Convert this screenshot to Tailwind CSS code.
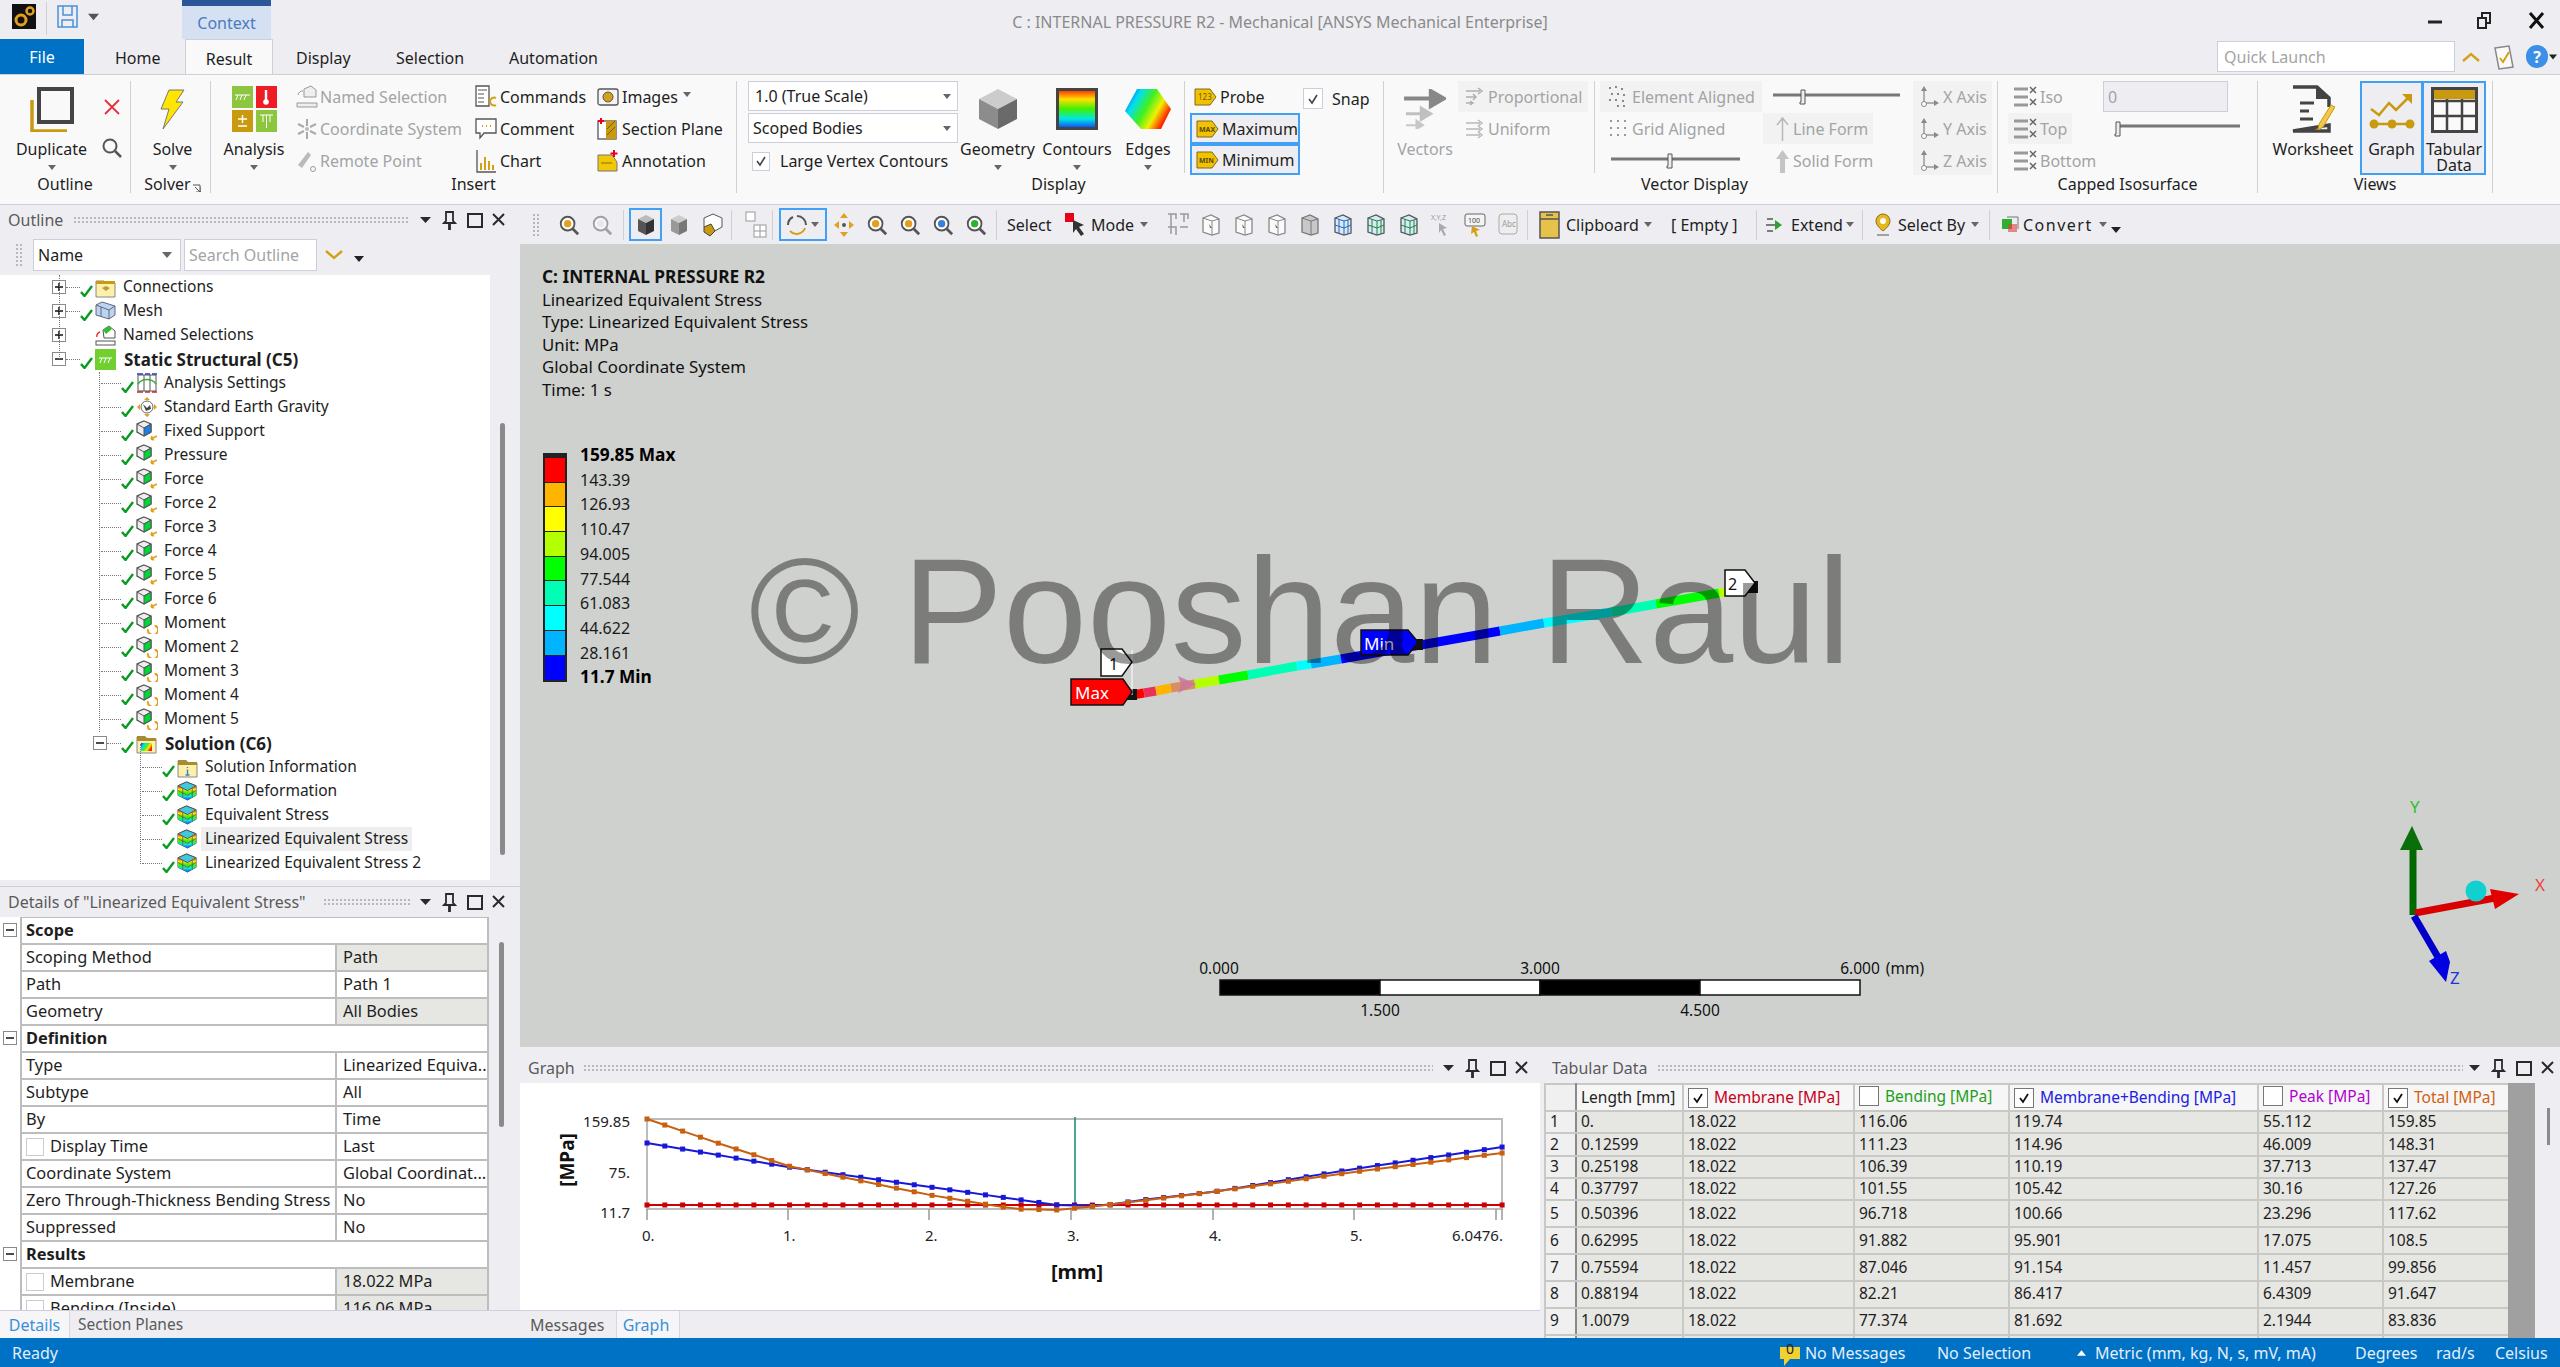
<!DOCTYPE html>
<html lang="en">
<head>
<meta charset="UTF-8" />
<title>C : INTERNAL PRESSURE R2 - Mechanical</title>
<script src="https://cdn.jsdelivr.net/npm/@tailwindcss/browser@4"></script>
</head>
<body class="w-[2560px] h-[1367px] overflow-hidden bg-[#eeeef2] font-['Noto_Sans',sans-serif] text-[16px] leading-none text-[#1e1e1e]">

<!-- shared icons -->
<svg class="absolute w-0 h-0">
  <defs>
    <linearGradient id="rainbow" x1="0" y1="0" x2="0" y2="1">
      <stop offset="0" stop-color="#ff2000"/><stop offset=".25" stop-color="#ffe000"/><stop offset=".5" stop-color="#40f000"/><stop offset=".75" stop-color="#00e8e0"/><stop offset="1" stop-color="#1040ff"/>
    </linearGradient>
    <linearGradient id="rainbow2" x1="0" y1="0" x2="1" y2=".5">
      <stop offset="0" stop-color="#1030f0"/><stop offset=".3" stop-color="#00e0f0"/><stop offset=".55" stop-color="#40f020"/><stop offset=".78" stop-color="#f0f000"/><stop offset="1" stop-color="#ff2000"/>
    </linearGradient>
  </defs>
  <symbol id="ok" viewBox="0 0 13 12"><path d="M1 7l3.500 4L12 1" fill="none" stroke="#0a9a22" stroke-width="2.400"/></symbol>
  <symbol id="plus" viewBox="0 0 14 14"><rect x=".5" y=".5" width="13" height="13" fill="#fff" stroke="#8a8a8a"/><path d="M3 7h8M7 3v8" stroke="#111" stroke-width="1.500"/></symbol>
  <symbol id="minus" viewBox="0 0 14 14"><rect x=".5" y=".5" width="13" height="13" fill="#fff" stroke="#8a8a8a"/><path d="M3 7h8" stroke="#111" stroke-width="1.500"/></symbol>
  <symbol id="cube" viewBox="0 0 22 22">
    <path d="M8 1l7 3v8l-7 4-7-4V4z" fill="#eee" stroke="#555" stroke-width="1.300"/>
    <path d="M8 8l7-4v8l-7 4z" fill="currentColor" stroke="#555"/>
    <path d="M1 4l7 4 7-4" fill="none" stroke="#555"/>
  </symbol>
  <symbol id="load" viewBox="0 0 22 22"><path d="M21 16l-6 3m0 0l1-3m-1 3l3 1" fill="none" stroke="#e0a020" stroke-width="1.600"/></symbol>
  <symbol id="moment" viewBox="0 0 22 22"><path d="M20 14a5 5 0 1 1-8 3" fill="none" stroke="#e0a020" stroke-width="1.800"/><path d="M18 13l3 0-1 3" fill="#e0a020"/></symbol>
  <symbol id="result" viewBox="0 0 22 22">
    <path d="M10 1l10 4v10l-9 5-10-5V5z" fill="#999" stroke="#555"/>
    <path d="M1 5l10 5v10l-10-5z" fill="url(#rainbow)"/>
    <path d="M11 10l9-5v10l-9 5z" fill="url(#rainbow)"/>
    <path d="M1 5l9-4 10 4-9 5z" fill="#40c8e0" stroke="#555"/>
    <path d="M6 7.500v10M16 7.500v10M1 10l10 5 9-5" fill="none" stroke="#555" stroke-width=".8"/>
  </symbol>
  <symbol id="mag" viewBox="0 0 24 24">
    <circle cx="10.500" cy="10.500" r="7.500" fill="#fff" stroke="#555" stroke-width="2"/>
    <circle cx="10.500" cy="10.500" r="4" fill="currentColor"/>
    <path d="M16 16l6 6" stroke="#555" stroke-width="3"/>
  </symbol>
  <symbol id="caret" viewBox="0 0 10 6"><path d="M0 0h10L5 6z" fill="currentColor"/></symbol>
  <symbol id="panelctl" viewBox="0 0 90 20">
    <path d="M4 7h11l-5.500 6z" fill="#2a2a2a"/>
    <path d="M30 2h7v9l2 2h-5v6h-1v-6h-5l2-2z" fill="none" stroke="#2a2a2a" stroke-width="1.800"/>
    <rect x="52" y="4" width="14" height="13" fill="none" stroke="#2a2a2a" stroke-width="2"/>
    <path d="M77 4l11 11M88 4L77 15" stroke="#2a2a2a" stroke-width="2"/>
  </symbol>
  <symbol id="face" viewBox="0 0 22 24"><path d="M3 5l8-3 8 4v14l-7 2-9-3z" fill="#fafafa" stroke="#888" stroke-width="1.300"/><path d="M3 5l9 3 7-2M12 8v14" fill="none" stroke="#888"/><path d="M9 11l3 4h-2z" fill="#666"/></symbol>
  <symbol id="meshbox" viewBox="0 0 22 24"><path d="M3 5l8-3 8 4v14l-7 2-9-3z" fill="#d8e8ff" stroke="#555" stroke-width="1.300"/><path d="M3 5l9 3 7-2M12 8v14M3 12l9 3 7-3M7 6v14M16 7v14" fill="none" stroke="#2a6ab0"/></symbol>
  <symbol id="meshgreen" viewBox="0 0 22 24"><path d="M3 5l8-3 8 4v14l-7 2-9-3z" fill="#d8e8ff" stroke="#555" stroke-width="1.300"/><path d="M3 5l9 3 7-2M12 8v14M3 12l9 3 7-3M7 6v14M16 7v14" fill="none" stroke="#208a30"/></symbol>
  <symbol id="arrowsgray" viewBox="0 0 44 42"><path d="M0 10h32M28 2l14 8-14 8z" fill="#888" stroke="#888" stroke-width="4"/><path d="M2 26h20M18 20l10 6-10 6z" fill="#c0c0c0" stroke="#c0c0c0" stroke-width="3"/><path d="M2 38h14M13 33l7 5-7 4z" fill="#c8c8c8" stroke="#c8c8c8" stroke-width="2"/></symbol>
  <symbol id="axis" viewBox="0 0 22 24"><path d="M6 3v15h11" fill="none" stroke="#999" stroke-width="1.500"/><path d="M3 6l3-5 3 5zM16 15l5 3-5 3z" fill="#888"/><circle cx="6" cy="19" r="2.500" fill="#fff" stroke="#888"/></symbol>
  <symbol id="iso" viewBox="0 0 24 24"><path d="M1 4h14M1 12h14M1 20h14" stroke="#999" stroke-width="3"/><path d="M17 2l6 6m0-6l-6 6M17 14l6 6m0-6l-6 6" stroke="#666" stroke-width="1.500"/></symbol>
</svg>

<!-- title bar -->
<header class="grid grid-cols-[1fr_auto_1fr] h-[39px]">
  <div class="flex items-start">
    <svg class="w-6 h-[25px] ml-3 mt-1" viewBox="0 0 24 25"><rect width="24" height="25" fill="#111"/><circle cx="9" cy="16" r="5" fill="none" stroke="#e0a020" stroke-width="3"/><circle cx="18" cy="7" r="3.500" fill="none" stroke="#e0a020" stroke-width="2.500"/></svg>
    <i class="w-px h-[33px] bg-[#d0d0d4] ml-[10px] mt-0.5"></i>
    <svg class="w-[21px] h-[23px] ml-2.5 mt-[5px]" viewBox="0 0 21 23"><path d="M1 1h19v21H1zM6 1v9h9V1M5 22v-7h11v7" fill="none" stroke="#4a90d9" stroke-width="1.500"/></svg>
    <svg class="w-[11px] h-2 ml-2.5 mt-[13px] text-[#555]"><use href="#caret"/></svg>
    <div class="ml-[84px] w-[89px] h-[39px] bg-[#d5e1f2] border-t-[6px] border-[#2b579a] text-center text-[#4a7bbd] pt-[9px] -translate-x-[1px]">Context</div>
  </div>
  <div class="pt-[14px] text-[#8a8a8a] whitespace-nowrap">C : INTERNAL PRESSURE R2 - Mechanical [ANSYS Mechanical Enterprise]</div>
  <div class="flex justify-end items-start">
    <svg class="w-[120px] h-[24px] mr-[12px] mt-[9px]" viewBox="0 0 120 24">
      <path d="M0 13h14" stroke="#222" stroke-width="3"/>
      <path d="M50 9h8v10h-8zM54 8V4h8v10h-3" fill="none" stroke="#222" stroke-width="2"/>
      <path d="M102 4l13 15M115 4l-13 15" stroke="#111" stroke-width="3"/>
    </svg>
  </div>
</header>

<!-- ribbon tabs -->
<nav class="flex h-[35px] items-center whitespace-nowrap">
  <div class="w-[84px] h-[35px] bg-[#0072c6] text-white flex items-center justify-center">File</div>
  <div class="w-[101px] pl-[31px] pt-[3px]">Home</div>
  <div class="w-[88px] h-[35px] pt-[3px] flex items-center justify-center bg-[#f9f9f9] border-x border-t border-[#d0d0d4]">Result</div>
  <div class="w-[123px] pl-[23px] pt-[3px]">Display</div>
  <div class="w-[113px] pt-[3px]">Selection</div>
  <div class="w-[200px] pt-[3px]">Automation</div>
  <div class="ml-auto flex items-center">
    <div class="w-[238px] h-[31px] bg-white border border-[#cccedb] pl-1.5 flex items-center text-[#a2a4a5]">Quick Launch</div>
    <svg class="w-[18px] h-[10px] ml-[7px]" viewBox="0 0 18 10"><path d="M1 9l8-7 8 7" fill="none" stroke="#d4a017" stroke-width="2.400"/></svg>
    <svg class="w-[22px] h-[26px] ml-[13px]" viewBox="0 0 22 26"><path d="M2 4l14-2 4 21-14 2z" fill="#fafafa" stroke="#888" stroke-width="1.500"/><path d="M7 14l3 4 6-10" fill="none" stroke="#d4a017" stroke-width="2"/></svg>
    <div class="w-[22px] h-[23px] ml-[11px] rounded-full bg-[#3b8fe8] text-white font-bold flex items-center justify-center">?</div>
    <svg class="w-[8px] h-[6px] ml-[1px] mr-[3px] text-[#222]"><use href="#caret"/></svg>
  </div>
</nav>

<!-- ribbon -->
<div class="flex h-[131px] items-start bg-[#f9f9f9] border-y border-[#d0d0d4] whitespace-nowrap">

  <section class="w-[131px] h-[112px] mt-[6px] border-r border-[#d0d0d4] flex flex-col">
    <div class="flex h-[94px] pl-[15px]">
      <div class="flex flex-col items-center w-[73px]">
        <div class="h-[56px] flex items-center">
          <svg class="w-[44px] h-[46px]" viewBox="0 0 44 46"><path d="M2 14v31h35" fill="none" stroke="#c99a10" stroke-width="3.500"/><rect x="9" y="3" width="33" height="33" fill="#f9f9f9" stroke="#444" stroke-width="4"/></svg>
        </div>
        <div class="h-6 flex items-center">Duplicate</div>
        <svg class="w-2 h-[5px] mt-1 text-[#666]"><use href="#caret"/></svg>
      </div>
      <div class="flex flex-col items-center w-[28px] ml-[10px]">
        <svg class="w-4 h-4 mt-[18px]" viewBox="0 0 16 16"><path d="M1 1l14 14M15 1L1 15" stroke="#e8303a" stroke-width="1.800"/></svg>
        <svg class="w-5 h-5 mt-[23px]" viewBox="0 0 20 20"><circle cx="8" cy="8" r="6.500" fill="none" stroke="#555" stroke-width="2"/><path d="M13 13l6 6" stroke="#555" stroke-width="2.500"/></svg>
      </div>
    </div>
    <div class="text-center h-[18px] flex items-center justify-center">Outline</div>
  </section>

  <section class="w-[80px] h-[112px] mt-[6px] border-r border-[#d0d0d4] flex flex-col">
    <div class="flex flex-col items-center h-[94px] pl-1">
      <div class="h-[56px] flex items-center">
        <svg class="w-[27px] h-[41px]" viewBox="0 0 27 41"><path d="M10 1h15l-8 12h7L4 40l6-20H2z" fill="#ffe500" stroke="#777"/></svg>
      </div>
      <div class="h-6 flex items-center">Solve</div>
      <svg class="w-2 h-[5px] mt-1 text-[#666]"><use href="#caret"/></svg>
    </div>
    <div class="h-[18px] flex items-center justify-center pl-1">Solver<svg class="w-2 h-2 ml-0.5 mt-2" viewBox="0 0 8 8"><path d="M0 1h7v7M2 3l5 5M3 8h5V3" fill="none" stroke="#555"/></svg></div>
  </section>

  <section class="w-[526px] h-[112px] mt-[6px] border-r border-[#d0d0d4] flex flex-col">
    <div class="flex h-[94px]">
      <div class="flex flex-col items-center w-[62px] ml-3">
        <div class="h-[56px] flex items-center">
          <svg class="w-[45px] h-[46px]" viewBox="0 0 45 46">
            <rect width="21" height="22" fill="#8cc63f"/><path d="M3 9h15M6 9l-2 5M10 9l-2 5M14 9l-2 5" stroke="#fff" fill="none"/>
            <rect x="24" width="21" height="22" fill="#ee1c25"/><path d="M34 4v11" stroke="#fff" stroke-width="2.400"/><circle cx="34" cy="16" r="2.800" fill="#fff"/>
            <rect y="24" width="21" height="22" fill="#c99a10"/><path d="M6 33h9M10.500 29v8M6 40h9" stroke="#fff" stroke-width="1.400"/>
            <rect x="24" y="24" width="21" height="22" fill="#8cc63f"/><path d="M28 29h13M34.500 29v13M31 29v7M38 29v7" stroke="#fff" fill="none"/>
          </svg>
        </div>
        <div class="h-6 flex items-center">Analysis</div>
        <svg class="w-2 h-[5px] mt-1 text-[#666]"><use href="#caret"/></svg>
      </div>
      <div class="grid grid-rows-[32px_32px_32px] w-[179px] ml-[11px] text-[#a2a4a5]">
        <div class="flex items-center gap-0.5"><svg class="w-[22px] h-[24px]" viewBox="0 0 22 24"><path d="M8 4l7-3 5 4v7H8zM1 18h20v4H1z" fill="#eee" stroke="#999"/><path d="M2 10a5 5 0 0 1 5-4" fill="none" stroke="#999"/></svg>Named Selection</div>
        <div class="flex items-center gap-0.5"><svg class="w-[22px] h-[24px]" viewBox="0 0 22 24"><path d="M11 2v7M11 15v7M2 7l6 3M14 14l6 3M2 17l6-3M14 10l6-3" stroke="#aaa" stroke-width="2"/><circle cx="11" cy="12" r="2" fill="#bbb"/></svg>Coordinate System</div>
        <div class="flex items-center gap-0.5"><svg class="w-[22px] h-[24px]" viewBox="0 0 22 24"><path d="M2 16L12 3l3 3-9 13z" fill="#bbb"/><circle cx="17" cy="20" r="2.500" fill="none" stroke="#999"/></svg>Remote Point</div>
      </div>
      <div class="grid grid-rows-[32px_32px_32px] w-[122px]">
        <div class="flex items-center gap-[3px]"><svg class="w-[22px] h-[24px]" viewBox="0 0 22 24"><path d="M1 1h13v20H1z" fill="#fff" stroke="#555" stroke-width="1.300"/><path d="M3 5h9M3 9h6M3 13h6M3 17h6" stroke="#555"/><path d="M21 13a4 4 0 1 0 0 7" fill="none" stroke="#d4a017" stroke-width="2"/></svg>Commands</div>
        <div class="flex items-center gap-[3px]"><svg class="w-[22px] h-[24px]" viewBox="0 0 22 24"><path d="M1 2h20v14H9l-4 5v-5H1z" fill="#fff" stroke="#555" stroke-width="1.300"/><path d="M7 9h1M11 9h1M15 9h1" stroke="#d4a017" stroke-width="2"/></svg>Comment</div>
        <div class="flex items-center gap-[3px]"><svg class="w-[22px] h-[24px]" viewBox="0 0 22 24"><path d="M2 1v22h19" fill="none" stroke="#555" stroke-width="1.300"/><path d="M6 21v-7M10 21V8M14 21v-9M18 21v-5" stroke="#d4a017" stroke-width="2"/></svg>Chart</div>
      </div>
      <div class="grid grid-rows-[32px_32px_32px] w-[125px]">
        <div class="flex items-center gap-[3px]"><svg class="w-[22px] h-[24px]" viewBox="0 0 22 24"><rect x="1" y="4" width="20" height="16" rx="2" fill="#f4f4f4" stroke="#555" stroke-width="1.300"/><circle cx="11" cy="12" r="5" fill="#d4a017" stroke="#555"/></svg>Images<svg class="w-2 h-[5px] ml-0.5 -mt-1.5 text-[#666]"><use href="#caret"/></svg></div>
        <div class="flex items-center gap-[3px]"><svg class="w-[22px] h-[24px]" viewBox="0 0 22 24"><rect x="1" y="4" width="18" height="18" fill="#fff" stroke="#555" stroke-width="1.300"/><path d="M9 4h10v18H9z" fill="#c99a10"/><path d="M10 12l8-8M10 18l8-8" stroke="#7a5a10"/><path d="M4 1v6M1 4h6" stroke="#e8001c" stroke-width="2"/></svg>Section Plane</div>
        <div class="flex items-center gap-[3px]"><svg class="w-[22px] h-[24px]" viewBox="0 0 22 24"><path d="M1 6h14l5 7v9H1z" fill="#f0c808" stroke="#777"/><path d="M4 14h11" stroke="#8a6a10"/><path d="M17 1v7M13.500 4.500h7" stroke="#e8001c" stroke-width="2"/></svg>Annotation</div>
      </div>
    </div>
    <div class="h-[18px] flex items-center justify-center">Insert</div>
  </section>

  <section class="w-[647px] h-[112px] mt-[6px] border-r border-[#d0d0d4] flex flex-col">
    <div class="flex h-[94px]">
      <div class="grid grid-rows-[32px_32px_32px] w-[210px] ml-[11px]">
        <div class="h-[30px] bg-white border border-[#cccedb] flex items-center justify-between px-1.5">1.0 (True Scale)<svg class="w-2 h-[5px] text-[#666]"><use href="#caret"/></svg></div>
        <div class="h-[30px] bg-white border border-[#cccedb] flex items-center justify-between px-1">Scoped Bodies<svg class="w-2 h-[5px] mr-0.5 text-[#666]"><use href="#caret"/></svg></div>
        <div class="flex items-center pl-1"><span class="w-[18px] h-[19px] border border-[#cccedb] bg-white flex items-center justify-center"><svg class="w-3 h-3" viewBox="0 0 12 12"><path d="M2 6l3 4 5-8" fill="none" stroke="#444" stroke-width="1.600"/></svg></span><span class="ml-[10px]">Large Vertex Contours</span></div>
      </div>
      <div class="flex flex-col items-center w-[79px]">
        <div class="h-[56px] flex items-center">
          <svg class="w-[38px] h-[40px]" viewBox="0 0 38 40"><path d="M19 0l19 10-19 10L0 10z" fill="#ccc"/><path d="M0 10l19 10v20L0 30z" fill="#8c8c8c"/><path d="M38 10L19 20v20l19-10z" fill="#6a6a6a"/></svg>
        </div>
        <div class="h-6 flex items-center">Geometry</div>
        <svg class="w-2 h-[5px] mt-1 text-[#666]"><use href="#caret"/></svg>
      </div>
      <div class="flex flex-col items-center w-[80px]">
        <div class="h-[56px] flex items-center">
          <svg class="w-[42px] h-[42px]" viewBox="0 0 42 42"><rect x="1.500" y="1.500" width="39" height="39" fill="url(#rainbow)" stroke="#444" stroke-width="3"/></svg>
        </div>
        <div class="h-6 flex items-center">Contours</div>
        <svg class="w-2 h-[5px] mt-1 text-[#666]"><use href="#caret"/></svg>
      </div>
      <div class="flex flex-col items-center w-[62px]">
        <div class="h-[56px] flex items-center">
          <svg class="w-[46px] h-[40px]" viewBox="0 0 46 40"><path d="M12 0h20l14 20-10 20H16L0 22z" fill="url(#rainbow2)"/></svg>
        </div>
        <div class="h-6 flex items-center">Edges</div>
        <svg class="w-2 h-[5px] mt-1 text-[#666]"><use href="#caret"/></svg>
      </div>
      <div class="w-px h-[92px] bg-[#d0d0d4] ml-[5px]"></div>
      <div class="grid grid-rows-[32px_31px_31px] w-[108px] ml-[5px]">
        <div class="flex items-center pl-1 gap-[3px]"><svg class="w-[23px] h-[18px]" viewBox="0 0 23 18"><path d="M1 1h15l6 8-6 8H1z" fill="#f2c100" stroke="#7a6a20"/><text x="4" y="12" font-size="8" fill="#6a5a10">123</text></svg>Probe</div>
        <div class="flex items-center pl-1 gap-[3px] border-2 border-[#3fa0f5] bg-[#eeeef2] h-[31px]"><svg class="w-[23px] h-[18px]" viewBox="0 0 23 18"><path d="M1 1h15l6 8-6 8H1z" fill="#f2c100" stroke="#7a6a20"/><text x="3" y="12" font-size="7" font-weight="700" fill="#5a4a10">MAX</text></svg>Maximum</div>
        <div class="flex items-center pl-1 gap-[3px] border-2 border-[#3fa0f5] bg-[#eeeef2] h-[31px]"><svg class="w-[23px] h-[18px]" viewBox="0 0 23 18"><path d="M1 1h15l6 8-6 8H1z" fill="#f2c100" stroke="#7a6a20"/><text x="3" y="12" font-size="7" font-weight="700" fill="#5a4a10">MIN</text></svg>Minimum</div>
      </div>
      <div class="flex items-start w-[85px] pl-[5px] pt-[7px]">
        <span class="w-[20px] h-[21px] border border-[#cccedb] bg-white flex items-center justify-center"><svg class="w-3 h-3" viewBox="0 0 12 12"><path d="M2 6l3 4 5-8" fill="none" stroke="#444" stroke-width="1.600"/></svg></span>
        <span class="ml-[9px] mt-[3px]">Snap</span>
      </div>
    </div>
    <div class="h-[18px] flex items-center justify-center -ml-[3px]">Display</div>
  </section>

  <section class="w-[614px] h-[112px] mt-[6px] border-r border-[#d0d0d4] flex flex-col">
    <div class="flex h-[94px] text-[#a2a4a5]">
      <div class="flex flex-col items-center w-[56px] ml-[13px]">
        <div class="h-[56px] flex items-center"><svg class="w-[42px] h-[40px]"><use href="#arrowsgray"/></svg></div>
        <div class="h-6 flex items-center">Vectors</div>
      </div>
      <div class="grid grid-rows-[32px_32px_32px] w-[130px] ml-[5px]">
        <div class="flex items-center pl-[7px] gap-[3px] bg-[#f2f2f2] h-[31px]"><svg class="w-5 h-5" viewBox="0 0 20 20"><path d="M1 4h14M1 10h9M1 16h6M13 1l4 3-4 3M8 7l3 3-3 3M5 14l3 2-3 2" fill="none" stroke="#b0b0b0" stroke-width="1.500"/></svg>Proportional</div>
        <div class="flex items-center pl-[7px] gap-[3px] h-[31px]"><svg class="w-5 h-5" viewBox="0 0 20 20"><path d="M1 4h14M1 10h14M1 16h14M13 1l4 3-4 3M13 7l4 3-4 3M13 13l4 3-4 3" fill="none" stroke="#b8b8b8" stroke-width="1.500"/></svg>Uniform</div>
      </div>
      <div class="w-px h-[92px] bg-[#d0d0d4] ml-[6px]"></div>
      <div class="grid grid-rows-[32px_32px_32px] w-[162px] ml-[5px]">
        <div class="flex items-center pl-[6px] gap-0.5 bg-[#f2f2f2] h-[31px]"><svg class="w-6 h-6" viewBox="0 0 24 24"><path d="M3 3h2M9 2h2M15 4h2M5 9h2M11 9h2M17 10h2M3 15h2M9 15h2M16 16h2M11 21h2M17 21h2" stroke="#888" stroke-width="2"/></svg>Element Aligned</div>
        <div class="flex items-center pl-[6px] gap-0.5 h-[31px]"><svg class="w-6 h-6" viewBox="0 0 24 24"><path d="M4 4h2M11 4h2M18 4h2M4 11h2M11 11h2M18 11h2M4 18h2M11 18h2M18 18h2" stroke="#999" stroke-width="2"/></svg>Grid Aligned</div>
        <div class="flex items-center pl-[11px]"><svg class="w-[129px] h-4" viewBox="0 0 129 16"><path d="M0 6h129" stroke="#777" stroke-width="3"/><path d="M57 1h4v14h-5v-2h1z" fill="#eee" stroke="#555"/></svg></div>
      </div>
      <div class="grid grid-rows-[32px_32px_32px] w-[150px] ml-px">
        <div class="flex items-center pl-[10px]"><svg class="w-[127px] h-4" viewBox="0 0 127 16"><path d="M0 6h127" stroke="#777" stroke-width="3"/><path d="M28 1h4v14h-5v-2h1z" fill="#eee" stroke="#555"/></svg></div>
        <div class="flex items-center pl-3 gap-[3px] bg-[#f2f2f2] h-[31px] w-[110px]"><svg class="w-[15px] h-[26px]" viewBox="0 0 15 26"><path d="M7.500 25V3M2 9l5.500-7L13 9" fill="none" stroke="#b8b8b8" stroke-width="1.500"/></svg>Line Form</div>
        <div class="flex items-center pl-3 gap-[3px] h-[31px]"><svg class="w-[15px] h-[26px]" viewBox="0 0 15 26"><path d="M5 25V11H1L7.500 2 14 11h-4v14z" fill="#c4c4c4"/></svg>Solid Form</div>
      </div>
      <div class="grid grid-rows-[32px_32px_32px] w-[79px] bg-[#f2f2f2] pl-[5px]">
        <div class="flex items-center gap-[3px]"><svg class="w-[22px] h-6"><use href="#axis"/></svg>X Axis</div>
        <div class="flex items-center gap-[3px]"><svg class="w-[22px] h-6"><use href="#axis"/></svg>Y Axis</div>
        <div class="flex items-center gap-[3px]"><svg class="w-[22px] h-6"><use href="#axis"/></svg>Z Axis</div>
      </div>
    </div>
    <div class="h-[18px] flex items-center justify-center pl-[8px]">Vector Display</div>
  </section>

  <section class="w-[260px] h-[112px] mt-[6px] border-r border-[#d0d0d4] flex flex-col">
    <div class="flex h-[94px] text-[#a2a4a5]">
      <div class="grid grid-rows-[32px_32px_32px] w-[95px] ml-[10px]">
        <div class="flex items-center pl-[5px] gap-[3px]"><svg class="w-6 h-6"><use href="#iso"/></svg>Iso</div>
        <div class="flex items-center pl-[5px] gap-[3px] bg-[#f2f2f2] h-[31px] w-[64px]"><svg class="w-6 h-6"><use href="#iso"/></svg>Top</div>
        <div class="flex items-center pl-[5px] gap-[3px]"><svg class="w-6 h-6"><use href="#iso"/></svg>Bottom</div>
      </div>
      <div class="grid grid-rows-[32px_32px_32px] w-[140px]">
        <div class="w-[125px] h-[31px] bg-[#eeeef2] border border-[#cccedb] pl-1 flex items-center">0</div>
        <div class="flex items-center pl-[9px]"><svg class="w-[128px] h-4" viewBox="0 0 128 16"><path d="M4 5h124" stroke="#777" stroke-width="3"/><path d="M4 1h4v14H3v-2h1z" fill="#eee" stroke="#555"/></svg></div>
      </div>
    </div>
    <div class="h-[18px] flex items-center justify-center">Capped Isosurface</div>
  </section>

  <section class="w-[235px] h-[112px] mt-[6px] border-r border-[#d0d0d4] flex flex-col">
    <div class="flex h-[94px]">
      <div class="flex flex-col items-center w-[84px] ml-[13px]">
        <div class="h-[56px] flex items-center">
          <svg class="w-[44px] h-[48px]" viewBox="0 0 44 48"><path d="M2 2h24l12 11v9M38 40v6H2z" fill="#f9f9f9" stroke="#444" stroke-width="3.500"/><path d="M26 2v11h12" fill="#444" stroke="#444" stroke-width="2"/><path d="M9 18h14M9 26h9M9 34h13" stroke="#444" stroke-width="3"/><path d="M40 20l4 2-12 20-5 3 1-6z" fill="#f2c84a" stroke="#c99a10"/></svg>
        </div>
        <div class="h-6 flex items-center">Worksheet</div>
      </div>
      <div class="flex flex-col items-center w-[63px] ml-[5px] border-2 border-[#3fa0f5] bg-[#eeeef2]">
        <div class="h-[54px] flex items-center">
          <svg class="w-[46px] h-[38px]" viewBox="0 0 46 38"><path d="M2 18l8 6 10-12 7 7 13-13" fill="none" stroke="#c99a10" stroke-width="2.500"/><path d="M33 3h10v10z" fill="#c99a10"/><path d="M4 33h38" stroke="#c99a10" stroke-width="2.500"/><circle cx="5" cy="33" r="4.500" fill="#c99a10"/><circle cx="23" cy="33" r="4.500" fill="#c99a10"/><circle cx="41" cy="33" r="4.500" fill="#c99a10"/></svg>
        </div>
        <div class="h-6 flex items-center">Graph</div>
      </div>
      <div class="flex flex-col items-center w-[64px] -ml-px border-2 border-[#3fa0f5] bg-[#eeeef2]">
        <div class="h-[54px] flex items-center">
          <svg class="w-[47px] h-[46px]" viewBox="0 0 47 46"><rect x="1.500" y="1.500" width="44" height="43" fill="#fafafa" stroke="#444" stroke-width="3"/><rect x="3" y="3" width="41" height="9" fill="#c99a10"/><path d="M1 14h45M1 29h45M16 12v33M31 12v33" stroke="#444" stroke-width="2.500"/></svg>
        </div>
        <div class="h-6 flex items-center">Tabular</div>
        <div class="h-4 flex items-center -mt-1">Data</div>
      </div>
    </div>
    <div class="h-[18px] flex items-center justify-center">Views</div>
  </section>
</div>

<!-- main -->
<main class="flex h-[1133px]">

  <!-- left column -->
  <aside class="w-[520px] flex flex-col shrink-0">
    <div class="flex items-center h-[30px] pl-2 text-[#5a5a5a] whitespace-nowrap">
      <span class="w-[65px]">Outline</span>
      <i class="w-[337px] h-2 bg-[radial-gradient(#b8b8bc_1px,transparent_1px)] bg-size-[4px_4px]"></i>
      <svg class="w-[90px] h-5 ml-1.5"><use href="#panelctl"/></svg>
    </div>
    <div class="flex items-center h-[40px]">
      <i class="w-2 h-6 ml-[15px] bg-[radial-gradient(#b8b8bc_1px,transparent_1px)] bg-size-[4px_4px]"></i>
      <div class="w-[148px] h-[32px] ml-2.5 bg-white border border-[#cccedb] flex items-center justify-between pl-1 pr-2">Name<svg class="w-2.5 h-1.5 text-[#666]"><use href="#caret"/></svg></div>
      <div class="w-[133px] h-[32px] ml-[3px] bg-white border border-[#cccedb] flex items-center pl-1 text-[#a2a4a5] whitespace-nowrap">Search Outline</div>
      <svg class="w-[18px] h-[10px] ml-2" viewBox="0 0 18 10"><path d="M1 1l8 7 8-7" fill="none" stroke="#d4a017" stroke-width="2.400"/></svg>
      <svg class="w-2.5 h-1.5 ml-[11px] mt-2 text-[#222]"><use href="#caret"/></svg>
    </div>

    <div class="flex h-[605px]">
      <div class="relative w-[490px] bg-white overflow-hidden whitespace-nowrap text-[15.500px]">
        <!-- tree connector lines -->
        <i class="absolute left-[59px] top-0 h-[84px] border-l border-dotted border-[#777]"></i>
        <i class="absolute left-[99px] top-[97px] h-[360px] border-l border-dotted border-[#777]"></i>
        <i class="absolute left-[140px] top-[469px] h-[120px] border-l border-dotted border-[#777]"></i>

        <div class="flex h-6 items-center pl-[52px]"><svg class="w-3.5 h-3.5"><use href="#plus"/></svg><i class="w-[14px] border-t border-dotted border-[#777]"></i><svg class="w-[13px] h-3 mt-2"><use href="#ok"/></svg><svg class="w-[21px] h-[21px] ml-0.5" viewBox="0 0 21 21"><path d="M1 4h8l2 2h9v14H1z" fill="#fdf0a8" stroke="#888"/><path d="M1 4h19v3H1z" fill="#c99a10"/><path d="M7 11l4-2 4 2-4 3z" fill="#b89a40"/></svg><span class="ml-[7px]">Connections</span></div>
        <div class="flex h-6 items-center pl-[52px]"><svg class="w-3.5 h-3.5"><use href="#plus"/></svg><i class="w-[14px] border-t border-dotted border-[#777]"></i><svg class="w-[13px] h-3 mt-2"><use href="#ok"/></svg><svg class="w-[21px] h-[21px] ml-0.5" viewBox="0 0 21 21"><path d="M1 4l6-3 13 4v9l-6 4-13-4z" fill="#bcd4f4" stroke="#667"/><path d="M1 4l13 5 6-4M14 9v9M6 6v10" fill="none" stroke="#667"/></svg><span class="ml-[7px]">Mesh</span></div>
        <div class="flex h-6 items-center pl-[52px]"><svg class="w-3.5 h-3.5"><use href="#plus"/></svg><i class="w-[29px]"></i><svg class="w-[21px] h-[21px]" viewBox="0 0 21 21"><path d="M8 5l6-4 6 5v7H9z" fill="#fff" stroke="#555"/><path d="M8 5l6-4 3 3-6 5z" fill="#30c030"/><rect x="1" y="16" width="19" height="4" fill="#fff" stroke="#555"/><path d="M2 12a4 4 0 0 1 3-5" fill="none" stroke="#e03030" stroke-width="1.400"/></svg><span class="ml-[7px]">Named Selections</span></div>
        <div class="flex h-6 items-center pl-[52px] font-bold text-[17px]"><svg class="w-3.5 h-3.5"><use href="#minus"/></svg><i class="w-[14px] border-t border-dotted border-[#777]"></i><svg class="w-[13px] h-3 mt-2"><use href="#ok"/></svg><svg class="w-[21px] h-[21px] ml-0.5" viewBox="0 0 21 21"><rect width="21" height="21" fill="#70d030"/><path d="M4 9h13M7 9l-2 5M11 9l-2 5M15 9l-2 5" stroke="#fff" fill="none"/></svg><span class="ml-2">Static Structural (C5)</span></div>

        <div class="flex h-6 items-center pl-[101px]"><i class="w-5 border-t border-dotted border-[#777]"></i><svg class="w-[13px] h-3 mt-2"><use href="#ok"/></svg><svg class="w-[22px] h-[22px] ml-0.5" viewBox="0 0 22 22"><path d="M1 2h6M9 2h5M16 2h5" stroke="#2030e0" stroke-width="1.500"/><path d="M1 20h6M9 20h5M16 20h5" stroke="#e02020" stroke-width="1.500"/><path d="M2 3h18v16H2zM8 3v16M14 3v16" fill="none" stroke="#555"/><path d="M2 12c4-6 14-6 18 0" fill="none" stroke="#30b030" stroke-width="1.400"/></svg><span class="ml-[6px]">Analysis Settings</span></div>
        <div class="flex h-6 items-center pl-[101px]"><i class="w-5 border-t border-dotted border-[#777]"></i><svg class="w-[13px] h-3 mt-2"><use href="#ok"/></svg><svg class="w-[22px] h-[22px] ml-0.5" viewBox="0 0 22 22"><circle cx="11" cy="11" r="6" fill="#fff" stroke="#666"/><path d="M7 8l4 4 3-3 1 4-5 2z" fill="#444"/><path d="M11 1l3 3h-6zM11 21l3-3H8zM1 11l3-3v6zM21 11l-3-3v6z" fill="#e0a020"/></svg><span class="ml-[6px]">Standard Earth Gravity</span></div>
        <div class="flex h-6 items-center pl-[101px]"><i class="w-5 border-t border-dotted border-[#777]"></i><svg class="w-[13px] h-3 mt-2"><use href="#ok"/></svg><svg class="w-[22px] h-[22px] ml-0.5 text-[#1a80e8]"><use href="#cube"/><use href="#load"/></svg><span class="ml-[6px]">Fixed Support</span></div>
        <div class="flex h-6 items-center pl-[101px]"><i class="w-5 border-t border-dotted border-[#777]"></i><svg class="w-[13px] h-3 mt-2"><use href="#ok"/></svg><svg class="w-[22px] h-[22px] ml-0.5 text-[#00d838]"><use href="#cube"/><use href="#load"/></svg><span class="ml-[6px]">Pressure</span></div>
        <div class="flex h-6 items-center pl-[101px]"><i class="w-5 border-t border-dotted border-[#777]"></i><svg class="w-[13px] h-3 mt-2"><use href="#ok"/></svg><svg class="w-[22px] h-[22px] ml-0.5 text-[#00d838]"><use href="#cube"/><use href="#load"/></svg><span class="ml-[6px]">Force</span></div>
        <div class="flex h-6 items-center pl-[101px]"><i class="w-5 border-t border-dotted border-[#777]"></i><svg class="w-[13px] h-3 mt-2"><use href="#ok"/></svg><svg class="w-[22px] h-[22px] ml-0.5 text-[#00d838]"><use href="#cube"/><use href="#load"/></svg><span class="ml-[6px]">Force 2</span></div>
        <div class="flex h-6 items-center pl-[101px]"><i class="w-5 border-t border-dotted border-[#777]"></i><svg class="w-[13px] h-3 mt-2"><use href="#ok"/></svg><svg class="w-[22px] h-[22px] ml-0.5 text-[#00d838]"><use href="#cube"/><use href="#load"/></svg><span class="ml-[6px]">Force 3</span></div>
        <div class="flex h-6 items-center pl-[101px]"><i class="w-5 border-t border-dotted border-[#777]"></i><svg class="w-[13px] h-3 mt-2"><use href="#ok"/></svg><svg class="w-[22px] h-[22px] ml-0.5 text-[#00d838]"><use href="#cube"/><use href="#load"/></svg><span class="ml-[6px]">Force 4</span></div>
        <div class="flex h-6 items-center pl-[101px]"><i class="w-5 border-t border-dotted border-[#777]"></i><svg class="w-[13px] h-3 mt-2"><use href="#ok"/></svg><svg class="w-[22px] h-[22px] ml-0.5 text-[#00d838]"><use href="#cube"/><use href="#load"/></svg><span class="ml-[6px]">Force 5</span></div>
        <div class="flex h-6 items-center pl-[101px]"><i class="w-5 border-t border-dotted border-[#777]"></i><svg class="w-[13px] h-3 mt-2"><use href="#ok"/></svg><svg class="w-[22px] h-[22px] ml-0.5 text-[#00d838]"><use href="#cube"/><use href="#load"/></svg><span class="ml-[6px]">Force 6</span></div>
        <div class="flex h-6 items-center pl-[101px]"><i class="w-5 border-t border-dotted border-[#777]"></i><svg class="w-[13px] h-3 mt-2"><use href="#ok"/></svg><svg class="w-[22px] h-[22px] ml-0.5 text-[#00d838]"><use href="#cube"/><use href="#moment"/></svg><span class="ml-[6px]">Moment</span></div>
        <div class="flex h-6 items-center pl-[101px]"><i class="w-5 border-t border-dotted border-[#777]"></i><svg class="w-[13px] h-3 mt-2"><use href="#ok"/></svg><svg class="w-[22px] h-[22px] ml-0.5 text-[#00d838]"><use href="#cube"/><use href="#moment"/></svg><span class="ml-[6px]">Moment 2</span></div>
        <div class="flex h-6 items-center pl-[101px]"><i class="w-5 border-t border-dotted border-[#777]"></i><svg class="w-[13px] h-3 mt-2"><use href="#ok"/></svg><svg class="w-[22px] h-[22px] ml-0.5 text-[#00d838]"><use href="#cube"/><use href="#moment"/></svg><span class="ml-[6px]">Moment 3</span></div>
        <div class="flex h-6 items-center pl-[101px]"><i class="w-5 border-t border-dotted border-[#777]"></i><svg class="w-[13px] h-3 mt-2"><use href="#ok"/></svg><svg class="w-[22px] h-[22px] ml-0.5 text-[#00d838]"><use href="#cube"/><use href="#moment"/></svg><span class="ml-[6px]">Moment 4</span></div>
        <div class="flex h-6 items-center pl-[101px]"><i class="w-5 border-t border-dotted border-[#777]"></i><svg class="w-[13px] h-3 mt-2"><use href="#ok"/></svg><svg class="w-[22px] h-[22px] ml-0.5 text-[#00d838]"><use href="#cube"/><use href="#moment"/></svg><span class="ml-[6px]">Moment 5</span></div>

        <div class="flex h-6 items-center pl-[93px] font-bold text-[17px]"><svg class="w-3.5 h-3.5"><use href="#minus"/></svg><i class="w-[14px] border-t border-dotted border-[#777]"></i><svg class="w-[13px] h-3 mt-2"><use href="#ok"/></svg><svg class="w-[21px] h-[21px] ml-0.5" viewBox="0 0 21 21"><path d="M1 4h8l2 2h9v14H1z" fill="#fdf0a8" stroke="#888"/><path d="M1 3h8l2 2h9v3H1z" fill="#a88a30"/><rect x="5" y="10" width="11" height="8" fill="url(#rainbow2)"/></svg><span class="ml-2">Solution (C6)</span></div>

        <div class="flex h-6 items-center pl-[142px]"><i class="w-5 border-t border-dotted border-[#777]"></i><svg class="w-[13px] h-3 mt-2"><use href="#ok"/></svg><svg class="w-[21px] h-[21px] ml-0.5" viewBox="0 0 21 21"><path d="M1 4h8l2 2h9v14H1z" fill="#fdf0a8" stroke="#888"/><path d="M1 3h8l2 2h9v3H1z" fill="#a88a30"/><path d="M10.500 10v1M10.500 12.500V18M8.500 18h4" stroke="#3080e0" stroke-width="1.400"/></svg><span class="ml-[7px]">Solution Information</span></div>
        <div class="flex h-6 items-center pl-[142px]"><i class="w-5 border-t border-dotted border-[#777]"></i><svg class="w-[13px] h-3 mt-2"><use href="#ok"/></svg><svg class="w-[21px] h-[21px] ml-0.5"><use href="#result"/></svg><span class="ml-[7px]">Total Deformation</span></div>
        <div class="flex h-6 items-center pl-[142px]"><i class="w-5 border-t border-dotted border-[#777]"></i><svg class="w-[13px] h-3 mt-2"><use href="#ok"/></svg><svg class="w-[21px] h-[21px] ml-0.5"><use href="#result"/></svg><span class="ml-[7px]">Equivalent Stress</span></div>
        <div class="flex h-6 items-center pl-[142px]"><i class="w-5 border-t border-dotted border-[#777]"></i><svg class="w-[13px] h-3 mt-2"><use href="#ok"/></svg><svg class="w-[21px] h-[21px] ml-0.5"><use href="#result"/></svg><span class="ml-[3px] px-1 h-6 flex items-center bg-[#eeeeee]">Linearized Equivalent Stress</span></div>
        <div class="flex h-6 items-center pl-[142px]"><i class="w-5 border-t border-dotted border-[#777]"></i><svg class="w-[13px] h-3 mt-2"><use href="#ok"/></svg><svg class="w-[21px] h-[21px] ml-0.5"><use href="#result"/></svg><span class="ml-[7px]">Linearized Equivalent Stress 2</span></div>
      </div>
      <div class="relative flex-1"><i class="absolute left-[10px] top-[148px] w-[5px] h-[432px] bg-[#8a8a8a] rounded-sm"></i></div>
    </div>

    <div class="h-[7px] border-b border-[#cccedb]"></div>

    <div class="flex items-center h-[30px] pl-2 text-[#5a5a5a] whitespace-nowrap">
      <span class="w-[315px]">Details of "Linearized Equivalent Stress"</span>
      <i class="w-[87px] h-2 bg-[radial-gradient(#b8b8bc_1px,transparent_1px)] bg-size-[4px_4px]"></i>
      <svg class="w-[90px] h-5 ml-1.5"><use href="#panelctl"/></svg>
    </div>

    <div class="flex h-[393px] bg-white overflow-hidden text-[16.400px]">
      <div class="w-[20px] shrink-0 flex flex-col">
        <svg class="w-3.5 h-3.5 ml-[3px] mt-[6px]"><use href="#minus"/></svg>
        <svg class="w-3.5 h-3.5 ml-[3px] mt-[94px]"><use href="#minus"/></svg>
        <svg class="w-3.5 h-3.5 ml-[3px] mt-[202px]"><use href="#minus"/></svg>
      </div>
      <div class="w-[469px] shrink-0 border-x-2 border-t border-[#bdbdbd] h-[420px] whitespace-nowrap">
        <div class="flex h-[27px] items-center pl-1 font-bold border-b-2 border-[#bdbdbd]">Scope</div>
        <div class="flex h-[27px] border-b-2 border-[#bdbdbd]"><div class="w-[315px] border-r-2 border-[#bdbdbd] pl-1 flex items-center">Scoping Method</div><div class="flex-1 pl-1.5 flex items-center bg-[#e6e6e2]">Path</div></div>
        <div class="flex h-[27px] border-b-2 border-[#bdbdbd]"><div class="w-[315px] border-r-2 border-[#bdbdbd] pl-1 flex items-center">Path</div><div class="flex-1 pl-1.5 flex items-center">Path 1</div></div>
        <div class="flex h-[27px] border-b-2 border-[#bdbdbd]"><div class="w-[315px] border-r-2 border-[#bdbdbd] pl-1 flex items-center">Geometry</div><div class="flex-1 pl-1.5 flex items-center bg-[#e6e6e2]">All Bodies</div></div>
        <div class="flex h-[27px] items-center pl-1 font-bold border-b-2 border-[#bdbdbd]">Definition</div>
        <div class="flex h-[27px] border-b-2 border-[#bdbdbd]"><div class="w-[315px] border-r-2 border-[#bdbdbd] pl-1 flex items-center">Type</div><div class="flex-1 pl-1.5 flex items-center overflow-hidden">Linearized Equiva...</div></div>
        <div class="flex h-[27px] border-b-2 border-[#bdbdbd]"><div class="w-[315px] border-r-2 border-[#bdbdbd] pl-1 flex items-center">Subtype</div><div class="flex-1 pl-1.5 flex items-center">All</div></div>
        <div class="flex h-[27px] border-b-2 border-[#bdbdbd]"><div class="w-[315px] border-r-2 border-[#bdbdbd] pl-1 flex items-center">By</div><div class="flex-1 pl-1.5 flex items-center">Time</div></div>
        <div class="flex h-[27px] border-b-2 border-[#bdbdbd]"><div class="w-[315px] border-r-2 border-[#bdbdbd] pl-1 flex items-center"><i class="w-[18px] h-[18px] border border-[#cccccc] mr-1.5"></i>Display Time</div><div class="flex-1 pl-1.5 flex items-center">Last</div></div>
        <div class="flex h-[27px] border-b-2 border-[#bdbdbd]"><div class="w-[315px] border-r-2 border-[#bdbdbd] pl-1 flex items-center">Coordinate System</div><div class="flex-1 pl-1.5 flex items-center overflow-hidden">Global Coordinat...</div></div>
        <div class="flex h-[27px] border-b-2 border-[#bdbdbd]"><div class="w-[315px] border-r-2 border-[#bdbdbd] pl-1 flex items-center">Zero Through-Thickness Bending Stress</div><div class="flex-1 pl-1.5 flex items-center">No</div></div>
        <div class="flex h-[27px] border-b-2 border-[#bdbdbd]"><div class="w-[315px] border-r-2 border-[#bdbdbd] pl-1 flex items-center">Suppressed</div><div class="flex-1 pl-1.5 flex items-center">No</div></div>
        <div class="flex h-[27px] items-center pl-1 font-bold border-b-2 border-[#bdbdbd]">Results</div>
        <div class="flex h-[27px] border-b-2 border-[#bdbdbd]"><div class="w-[315px] border-r-2 border-[#bdbdbd] pl-1 flex items-center"><i class="w-[18px] h-[18px] border border-[#cccccc] mr-1.5"></i>Membrane</div><div class="flex-1 pl-1.5 flex items-center bg-[#e6e6e2]">18.022 MPa</div></div>
        <div class="flex h-[27px] border-b-2 border-[#bdbdbd]"><div class="w-[315px] border-r-2 border-[#bdbdbd] pl-1 flex items-center"><i class="w-[18px] h-[18px] border border-[#cccccc] mr-1.5"></i>Bending (Inside)</div><div class="flex-1 pl-1.5 flex items-center bg-[#e6e6e2]">116.06 MPa</div></div>
      </div>
      <div class="relative flex-1 bg-[#eeeef2]"><i class="absolute left-[10px] top-[25px] w-[5px] h-[185px] bg-[#8a8a8a] rounded-sm"></i></div>
    </div>

    <div class="flex h-[28px] border-t border-[#cccedb] items-stretch whitespace-nowrap">
      <div class="w-[70px] bg-[#f6f6f8] border-r border-[#d8d8dc] flex items-center justify-center text-[#3a8fd8]">Details</div>
      <div class="ml-2 flex items-center text-[#5a5a5a] text-[15.500px]">Section Planes</div>
    </div>
  </aside>

  <!-- right column -->
  <div class="w-[2040px] flex flex-col">

    <!-- 3D toolbar -->
    <div class="flex items-center h-[39px] pl-3 whitespace-nowrap">
      <i class="w-2 h-6 mr-[12px] bg-[radial-gradient(#b8b8bc_1px,transparent_1px)] bg-size-[4px_4px]"></i>
      <span class="w-[33px] flex justify-center"><svg class="w-[22px] h-[22px] text-[#e0a020]"><use href="#mag"/></svg></span>
      <span class="w-[33px] flex justify-center"><svg class="w-[22px] h-[22px] text-[#e4e4e4] opacity-50"><use href="#mag"/></svg></span>
      <i class="w-px h-[30px] ml-[5px] bg-[#d0d0d4]"></i>
      <span class="w-[33px] h-[33px] ml-[5px] border-2 border-[#3fa0f5] flex items-center justify-center"><svg class="w-[20px] h-[22px]" viewBox="0 0 20 22"><path d="M10 1l8 4-8 4-8-4z" fill="#bbb"/><path d="M2 5l8 4v12l-8-4z" fill="#555"/><path d="M18 5l-8 4v12l8-4z" fill="#333"/></svg></span>
      <span class="w-[33px] flex justify-center"><svg class="w-[20px] h-[22px]" viewBox="0 0 20 22"><path d="M10 1l8 4-8 4-8-4z" fill="#ccc"/><path d="M2 5l8 4v12l-8-4z" fill="#999"/><path d="M18 5l-8 4v12l8-4z" fill="#777"/></svg></span>
      <span class="w-[33px] flex justify-center"><svg class="w-[22px] h-[24px]" viewBox="0 0 22 24"><path d="M12 1l9 4v9l-9 5-9-5V5z" fill="#fff" stroke="#555"/><path d="M3 14l7-3 4 7-5 5-6-4z" fill="#c99a10" stroke="#444"/></svg></span>
      <i class="w-px h-[30px] ml-[3px] bg-[#d0d0d4]"></i>
      <span class="w-[33px] ml-[7px] flex justify-center"><svg class="w-[22px] h-[28px]" viewBox="0 0 22 28"><rect x="1" y="1" width="9" height="9" fill="#fff" stroke="#999"/><rect x="9" y="14" width="12" height="12" fill="#fff" stroke="#999"/><path d="M15 14v12M9 20h12" stroke="#999"/></svg></span>
      <i class="w-px h-[30px] bg-[#d0d0d4]"></i>
      <span class="w-[48px] h-[33px] ml-1.5 border-2 border-[#3fa0f5] flex items-center justify-center gap-1"><svg class="w-[20px] h-[22px]" viewBox="0 0 20 22"><path d="M10 2a9 9 0 0 1 9 9" fill="none" stroke="#555" stroke-width="2"/><path d="M18 14a9 9 0 0 1-15 3" fill="none" stroke="#d4a017" stroke-width="2"/><path d="M1 11a9 9 0 0 1 5-8" fill="none" stroke="#555" stroke-width="2"/></svg><svg class="w-2 h-[5px] text-[#666]"><use href="#caret"/></svg></span>
      <span class="w-[33px] flex justify-center"><svg class="w-[22px] h-[26px]" viewBox="0 0 22 26"><path d="M11 1l4 5H7zM11 25l4-5H7zM1 13l5-4v8zM21 13l-5-4v8z" fill="#e0a020"/><circle cx="11" cy="13" r="2" fill="#555"/></svg></span>
      <span class="w-[33px] flex justify-center"><svg class="w-[22px] h-[22px] text-[#e0a020]"><use href="#mag"/></svg></span>
      <span class="w-[33px] flex justify-center"><svg class="w-[22px] h-[22px] text-[#e0a020]"><use href="#mag"/></svg></span>
      <span class="w-[33px] flex justify-center"><svg class="w-[22px] h-[22px] text-[#3a80d8]"><use href="#mag"/></svg></span>
      <span class="w-[33px] flex justify-center"><svg class="w-[22px] h-[22px] text-[#30b030]"><use href="#mag"/></svg></span>
      <i class="w-px h-[30px] ml-1 bg-[#d0d0d4]"></i>
      <span class="w-[46px] ml-2.5">Select</span>
      <svg class="w-[22px] h-[24px] ml-3" viewBox="0 0 22 24"><rect x="0" y="0" width="9" height="9" fill="#e8001c"/><path d="M8 7l11 5-5 2 5 7-3 2-5-7-3 4z" fill="#333"/></svg>
      <span class="w-12 ml-1">Mode</span>
      <svg class="w-2 h-[5px] text-[#666] ml-px"><use href="#caret"/></svg>
      <span class="w-[33px] ml-[13px] flex justify-center"><svg class="w-[22px] h-[26px]" viewBox="0 0 22 26"><path d="M1 2h8v5M13 2h8v5M1 15h8v8M13 15h8M4 2v20M17 2v8" fill="none" stroke="#999" stroke-width="1.500"/></svg></span>
      <span class="w-[33px] flex justify-center"><svg class="w-[22px] h-6"><use href="#face"/></svg></span>
      <span class="w-[33px] flex justify-center"><svg class="w-[22px] h-6"><use href="#face"/></svg></span>
      <span class="w-[33px] flex justify-center"><svg class="w-[22px] h-6"><use href="#face"/></svg></span>
      <span class="w-[33px] flex justify-center"><svg class="w-[22px] h-6" viewBox="0 0 22 24"><path d="M3 5l8-3 8 4v14l-7 2-9-3z" fill="#c8c8c8" stroke="#777" stroke-width="1.300"/><path d="M3 5l9 3 7-2M12 8v14" fill="none" stroke="#777"/></svg></span>
      <span class="w-[33px] flex justify-center"><svg class="w-[22px] h-6"><use href="#meshbox"/></svg></span>
      <span class="w-[33px] flex justify-center"><svg class="w-[22px] h-6"><use href="#meshgreen"/></svg></span>
      <span class="w-[33px] flex justify-center"><svg class="w-[22px] h-6"><use href="#meshgreen"/></svg></span>
      <span class="w-[33px] flex justify-center"><svg class="w-[22px] h-6" viewBox="0 0 22 24"><text x="0" y="7" font-size="7" fill="#999">X,Y,Z</text><path d="M8 10l8 5-4 1 3 6-2 1-3-6-2 3z" fill="#aaa"/></svg></span>
      <span class="w-[33px] flex justify-center"><svg class="w-[22px] h-6" viewBox="0 0 22 24"><rect x="1" y="1" width="20" height="12" rx="2" fill="#f4f4f4" stroke="#666"/><text x="4" y="10" font-size="7" fill="#444">100</text><path d="M8 13l8 4-4 1 2 5-2 1-2-5-3 2z" fill="#d4a017"/></svg></span>
      <span class="w-[33px] flex justify-center"><svg class="w-[22px] h-6" viewBox="0 0 22 24"><rect x="2" y="1" width="18" height="20" rx="3" fill="#eee" stroke="#aaa"/><text x="5" y="14" font-size="8" fill="#999">Abc</text></svg></span>
      <i class="w-px h-[30px] ml-[3px] bg-[#d0d0d4]"></i>
      <svg class="w-[21px] h-[28px] ml-[11px]" viewBox="0 0 21 28"><rect x="1" y="1" width="19" height="26" fill="#e6c24a" stroke="#555" stroke-width="1.500"/><path d="M1 8h19M7 4h7" stroke="#555" stroke-width="1.500"/></svg>
      <span class="w-[78px] ml-1.5">Clipboard</span>
      <svg class="w-2 h-[5px] text-[#666] mr-0.5"><use href="#caret"/></svg>
      <span class="w-[72px] ml-[17px]">[ Empty ]</span>
      <i class="w-px h-[30px] ml-[13px] bg-[#d0d0d4]"></i>
      <svg class="w-5 h-[22px] ml-[7px]" viewBox="0 0 20 22"><path d="M2 11h12M3 5h6M3 17h6" stroke="#555" stroke-width="1.500"/><path d="M11 6l7 5-7 5z" fill="#30a030"/></svg>
      <span class="w-[55px] ml-[7px]">Extend</span>
      <svg class="w-2 h-[5px] text-[#666] mr-0.5"><use href="#caret"/></svg>
      <i class="w-px h-[30px] ml-1.5 bg-[#d0d0d4]"></i>
      <svg class="w-5 h-[24px] ml-2.5" viewBox="0 0 20 24"><path d="M10 1a7 7 0 0 1 7 7c0 5-7 10-7 10S3 13 3 8a7 7 0 0 1 7-7z" fill="#e6b820" stroke="#8a6a10"/><circle cx="10" cy="8" r="3" fill="#fff"/><path d="M4 22h12" stroke="#555"/></svg>
      <span class="w-[73px] ml-[5px]">Select By</span>
      <svg class="w-2 h-[5px] text-[#666] mr-0.5"><use href="#caret"/></svg>
      <i class="w-px h-[30px] ml-2 bg-[#d0d0d4]"></i>
      <svg class="w-5 h-[20px] ml-2.5" viewBox="0 0 20 20"><rect x="2" y="4" width="10" height="10" fill="#30b030"/><path d="M7 2h11M18 2v12" stroke="#777"/><rect x="8" y="9" width="9" height="8" fill="#e04040" opacity=".6"/></svg>
      <span class="w-[76px] ml-[3px] tracking-[1.500px]">Convert</span>
      <svg class="w-2 h-[5px] text-[#666] mr-1"><use href="#caret"/></svg>
      <svg class="w-2.5 h-1.5 mt-2.5 text-[#222]"><use href="#caret"/></svg>
    </div>

    <!-- 3D view -->
    <div class="relative h-[803px] bg-[#cfd1ce] overflow-hidden">
      <div class="pl-[22px] pt-[22px] leading-[22.500px] text-[16.800px] text-[#111] whitespace-nowrap">
        <p class="font-bold text-[17.300px]">C: INTERNAL PRESSURE R2</p>
        <p>Linearized Equivalent Stress</p>
        <p>Type: Linearized Equivalent Stress</p>
        <p>Unit: MPa</p>
        <p>Global Coordinate System</p>
        <p>Time: 1 s</p>
      </div>

      <!-- legend -->
      <div class="flex items-start ml-[23px] mt-[52px]">
        <div class="w-[24px] flex flex-col border-2 border-[#222] border-t-[5px]">
          <i class="h-[24.700px] bg-[#ff0000] border-b border-[#222]"></i>
          <i class="h-[24.700px] bg-[#ffb400] border-b border-[#222]"></i>
          <i class="h-[24.700px] bg-[#ffff00] border-b border-[#222]"></i>
          <i class="h-[24.700px] bg-[#b4ff00] border-b border-[#222]"></i>
          <i class="h-[24.700px] bg-[#00ff00] border-b border-[#222]"></i>
          <i class="h-[24.700px] bg-[#00ffb4] border-b border-[#222]"></i>
          <i class="h-[24.700px] bg-[#00ffff] border-b border-[#222]"></i>
          <i class="h-[24.700px] bg-[#00b4ff] border-b border-[#222]"></i>
          <i class="h-[24.700px] bg-[#0000ff]"></i>
        </div>
        <div class="ml-[13px] -mt-[10px] flex flex-col text-[16px] leading-[24.700px] text-[#1a1a1a]">
          <span class="font-bold text-black text-[17.300px]">159.85 Max</span>
          <span>143.39</span><span>126.93</span><span>110.47</span><span>94.005</span><span>77.544</span><span>61.083</span><span>44.622</span><span>28.161</span>
          <span class="font-bold text-black text-[17.300px]">11.7 Min</span>
        </div>
      </div>

      <!-- model, probes, triad and scale are placed at their own spots on the view -->
      <svg class="absolute inset-0 w-[2040px] h-[803px]" viewBox="520 244 2040 803" id="view">
        <g fill="none" stroke-width="9">
          <path stroke="#ff0000" d="M1132 695L1144 693"/>
          <path stroke="#e8305a" d="M1144 693L1156 691"/>
          <path stroke="#ffb400" d="M1156 691L1171 688"/>
          <path stroke="#d89060" d="M1171 688L1195 684"/>
          <path stroke="#b4ff00" d="M1195 684L1219 680"/>
          <path stroke="#00ff00" d="M1219 680L1248 675"/>
          <path stroke="#00ffb4" d="M1248 675L1297 666"/>
          <path stroke="#00ffff" d="M1297 666L1311 664"/>
          <path stroke="#00b4ff" d="M1311 664L1341 659"/>
          <path stroke="#0000ff" d="M1341 659L1500 631"/>
          <path stroke="#00b4ff" d="M1500 631L1544 623"/>
          <path stroke="#00ffff" d="M1544 623L1612 612"/>
          <path stroke="#00ffb4" d="M1612 612L1656 604"/>
          <path stroke="#00ff00" d="M1656 604L1719 593"/>
          <path stroke="#b4ff00" d="M1719 593L1757 587"/>
        </g>
        <path d="M1178 676l18 8-18 9 3-9z" fill="#c878a0" opacity=".85"/>

        <rect x="1124" y="689" width="13" height="11" fill="#111"/>
        <path d="M1132 650v45" stroke="#fff"/>
        <path d="M1101 649h21l10 13-10 14h-21z" fill="#fff" stroke="#111" stroke-width="1.500"/>
        <text x="1109" y="670" font-size="16" fill="#111">1</text>
        <path d="M1071 679h52l9 13-9 13h-52z" fill="#f00" stroke="#111" stroke-width="1.500"/>
        <text x="1075" y="699" font-size="17" fill="#fff">Max</text>

        <rect x="1410" y="639" width="13" height="11" fill="#111"/>
        <path d="M1361 630h47l10 12-10 13h-47z" fill="#00f" stroke="#111" stroke-width="1.500"/>
        <text x="1364" y="650" font-size="17" fill="#fff">Min</text>

        <rect x="1746" y="581" width="12" height="12" fill="#111"/>
        <path d="M1725 570h20l10 13-10 13h-20z" fill="#fff" stroke="#111" stroke-width="1.500"/>
        <text x="1728" y="590" font-size="16" fill="#111">2</text>

        <!-- scale bar -->
        <g stroke="#111" stroke-width="1.500">
          <rect x="1220" y="980" width="160" height="15" fill="#000"/>
          <rect x="1380" y="980" width="160" height="15" fill="#fff"/>
          <rect x="1540" y="980" width="160" height="15" fill="#000"/>
          <rect x="1700" y="980" width="160" height="15" fill="#fff"/>
        </g>
        <g font-size="15.500" fill="#111" text-anchor="middle">
          <text x="1219" y="974">0.000</text><text x="1540" y="974">3.000</text><text x="1860" y="974">6.000</text>
          <text x="1380" y="1016">1.500</text><text x="1700" y="1016">4.500</text>
          <text x="1905" y="974">(mm)</text>
        </g>

        <!-- triad -->
        <path d="M2413 915V842" stroke="#006a00" stroke-width="7"/>
        <path d="M2412 826l11 24h-23z" fill="#0a6e0a"/>
        <path d="M2415 913l80-15" stroke="#d80000" stroke-width="7"/>
        <circle cx="2476" cy="891" r="10.500" fill="#12cfd0"/>
        <path d="M2490 889l29 5-24 15z" fill="#e00000"/>
        <path d="M2414 916l28 48" stroke="#0000c8" stroke-width="7"/>
        <path d="M2429 961l17-10 4 11-4 20z" fill="#0000e0"/>
        <text x="2535" y="891" font-size="17" fill="#f04040">X</text>
        <text x="2410" y="813" font-size="17" fill="#30c030">Y</text>
        <text x="2450" y="984" font-size="17" fill="#2030e0">Z</text>
      </svg>

      <!-- watermark sits over the whole view -->
      <div class="absolute left-[229px] top-[291px] font-['Liberation_Sans',sans-serif] text-[151px] leading-none text-black/40 whitespace-nowrap">© Pooshan Raul</div>
    </div>

    <div class="h-[6px]"></div>

    <!-- bottom panels -->
    <div class="flex h-[285px] gap-1">
      <div class="w-[1020px] flex flex-col">
        <div class="flex items-center h-[30px] pl-2 text-[#5a5a5a]">
          <span class="w-[55px]">Graph</span>
          <i class="w-[850px] h-2 bg-[radial-gradient(#b8b8bc_1px,transparent_1px)] bg-size-[4px_4px]"></i>
          <svg class="w-[90px] h-5 ml-1.5"><use href="#panelctl"/></svg>
        </div>
        <svg id="plot" class="w-[1020px] h-[227px] bg-white" viewBox="520 1083 1020 227">
          <path d="M647 1119h855v90H647z" fill="none" stroke="#bcbcbc" stroke-width="2"/>
          <path d="M647 1209v11M788 1209v11M929 1209v11M1071 1209v11M1213 1209v11M1354 1209v11M1496 1209v11M1502 1209v11" stroke="#999" stroke-width="1.500"/>
          <path d="M1075 1117v88" stroke="#108878" stroke-width="1.500"/>
          <g font-size="15" fill="#222">
            <text x="630" y="1127" text-anchor="end">159.85</text>
            <text x="630" y="1178" text-anchor="end">75.</text>
            <text x="630" y="1218" text-anchor="end">11.7</text>
            <text x="642" y="1241">0.</text><text x="783" y="1241">1.</text><text x="925" y="1241">2.</text><text x="1067" y="1241">3.</text><text x="1209" y="1241">4.</text><text x="1350" y="1241">5.</text><text x="1452" y="1241">6.0476.</text>
          </g>
          <text x="1077" y="1279" text-anchor="middle" font-size="20" font-weight="700" fill="#111">[mm]</text>
          <text transform="translate(574 1160) rotate(-90)" text-anchor="middle" font-size="19" font-weight="700" fill="#111">[MPa]</text>
        </svg>
        <div class="flex h-[28px] border-t border-[#cccedb] items-stretch whitespace-nowrap">
          <div class="w-[96px] flex items-center pl-[10px] text-[#5a5a5a]">Messages</div>
          <div class="w-[64px] bg-[#f6f6f8] border-x border-[#d8d8dc] flex items-center justify-center text-[#3a8fd8] pr-1">Graph</div>
        </div>
      </div>

      <div class="w-[1016px] flex flex-col">
        <div class="flex items-center h-[30px] pl-2 text-[#5a5a5a] whitespace-nowrap">
          <span class="w-[105px]">Tabular Data</span>
          <i class="w-[806px] h-2 bg-[radial-gradient(#b8b8bc_1px,transparent_1px)] bg-size-[4px_4px]"></i>
          <svg class="w-[90px] h-5 ml-[2px]"><use href="#panelctl"/></svg>
        </div>
        <div class="flex h-[255px] overflow-hidden">
          <div class="w-[964px] shrink-0 bg-[#e6e6e2] text-[15.500px]">
            <table class="table-fixed w-[964px] border-collapse [&_td]:border-2 [&_td]:border-[#c8c8c4] [&_td]:pl-[4px] [&_td:first-child]:bg-[#f0f0f0] [&_td:first-child]:border-r-[#8a8a8a]">
              <colgroup><col class="w-[31px]"/><col class="w-[107px]"/><col class="w-[171px]"/><col class="w-[155px]"/><col class="w-[249px]"/><col class="w-[125px]"/><col class="w-[126px]"/></colgroup>
              <thead>
                <tr class="h-[27px] bg-[#f6f6f6] whitespace-nowrap">
                  <td></td>
                  <td>Length [mm]</td>
                  <td class="text-[#c40020]"><span class="inline-flex items-center"><i class="w-5 h-5 mr-1.5 border border-[#777] bg-white flex items-center justify-center"><svg class="w-3 h-3" viewBox="0 0 12 12"><path d="M2 6l3 4 5-8" fill="none" stroke="#111" stroke-width="1.800"/></svg></i>Membrane [MPa]</span></td>
                  <td class="text-[#20a020]"><span class="inline-flex items-center"><i class="w-5 h-5 mr-1.5 border border-[#777] bg-white"></i>Bending [MPa]</span></td>
                  <td class="text-[#2020e0]"><span class="inline-flex items-center"><i class="w-5 h-5 mr-1.5 border border-[#777] bg-white flex items-center justify-center"><svg class="w-3 h-3" viewBox="0 0 12 12"><path d="M2 6l3 4 5-8" fill="none" stroke="#111" stroke-width="1.800"/></svg></i>Membrane+Bending [MPa]</span></td>
                  <td class="text-[#b000d0]"><span class="inline-flex items-center"><i class="w-5 h-5 mr-1.5 border border-[#777] bg-white"></i>Peak [MPa]</span></td>
                  <td class="text-[#d06010]"><span class="inline-flex items-center"><i class="w-5 h-5 mr-1.5 border border-[#777] bg-white flex items-center justify-center"><svg class="w-3 h-3" viewBox="0 0 12 12"><path d="M2 6l3 4 5-8" fill="none" stroke="#111" stroke-width="1.800"/></svg></i>Total [MPa]</span></td>
                </tr>
              </thead>
              <tbody>
                <tr class="h-[22.300px]"><td>1</td><td>0.</td><td>18.022</td><td>116.06</td><td>119.74</td><td>55.112</td><td>159.85</td></tr>
                <tr class="h-[22.300px]"><td>2</td><td>0.12599</td><td>18.022</td><td>111.23</td><td>114.96</td><td>46.009</td><td>148.31</td></tr>
                <tr class="h-[22.300px]"><td>3</td><td>0.25198</td><td>18.022</td><td>106.39</td><td>110.19</td><td>37.713</td><td>137.47</td></tr>
                <tr class="h-[22.300px]"><td>4</td><td>0.37797</td><td>18.022</td><td>101.55</td><td>105.42</td><td>30.16</td><td>127.26</td></tr>
                <tr class="h-[26.700px]"><td>5</td><td>0.50396</td><td>18.022</td><td>96.718</td><td>100.66</td><td>23.296</td><td>117.62</td></tr>
                <tr class="h-[27px]"><td>6</td><td>0.62995</td><td>18.022</td><td>91.882</td><td>95.901</td><td>17.075</td><td>108.5</td></tr>
                <tr class="h-[27px]"><td>7</td><td>0.75594</td><td>18.022</td><td>87.046</td><td>91.154</td><td>11.457</td><td>99.856</td></tr>
                <tr class="h-[26.700px]"><td>8</td><td>0.88194</td><td>18.022</td><td>82.21</td><td>86.417</td><td>6.4309</td><td>91.647</td></tr>
                <tr class="h-[27px]"><td>9</td><td>1.0079</td><td>18.022</td><td>77.374</td><td>81.692</td><td>2.1944</td><td>83.836</td></tr>
                <tr class="h-[27px]"><td></td><td></td><td></td><td></td><td></td><td></td><td></td></tr>
              </tbody>
            </table>
          </div>
          <div class="w-[27px] bg-[#a0a0a0]"></div>
          <div class="relative w-[25px]"><i class="absolute left-[12px] top-[25px] w-[3px] h-[37px] bg-[#8a8a8a]"></i></div>
        </div>
      </div>
    </div>
  </div>
</main>

<!-- status bar -->
<footer class="flex items-center h-[29px] bg-[#0072c6] text-[#e4eef8] whitespace-nowrap">
  <span class="ml-3">Ready</span>
  <svg class="w-6 h-7 ml-[1720px]" viewBox="0 0 24 28"><path d="M2 8h20v12h-10l-6 7v-7H2z" fill="#f2d030"/><text x="8" y="15" font-size="14" fill="#222">0</text></svg>
  <span class="ml-[3px] w-[132px]">No Messages</span>
  <span class="w-[140px]">No Selection</span>
  <svg class="w-[9px] h-[6px] rotate-180 text-white"><use href="#caret"/></svg>
  <span class="ml-[9px] w-[260px]">Metric (mm, kg, N, s, mV, mA)</span>
  <span class="w-[81px]">Degrees</span>
  <span class="w-[59px]">rad/s</span>
  <span>Celsius</span>
</footer>

<script>
  // graph curves: knots read in mm / plot pixels, markers every 0.12599 mm
  const plot = document.getElementById('plot');
  const NS = 'http://www.w3.org/2000/svg';
  const px = mm => 647 + mm * 141.4;
  const series = [
    { color: '#cc0000', knots: [[0, 1205], [6.05, 1205]] },
    { color: '#1818d8', knots: [[0, 1143], [1, 1167], [2, 1187], [2.9, 1205], [3.2, 1206], [3.5, 1200], [4, 1192], [5, 1169], [6.05, 1147]] },
    { color: '#c86010', knots: [[0, 1119], [0.5, 1143], [1, 1166], [2, 1195], [2.6, 1209], [2.9, 1210], [3.25, 1205], [4, 1192], [5, 1172], [6.05, 1153]] }
  ];
  const interp = (k, x) => {
    for (let i = 1; i < k.length; i++) {
      if (x <= k[i][0]) {
        const t = (x - k[i - 1][0]) / (k[i][0] - k[i - 1][0]);
        return k[i - 1][1] + t * (k[i][1] - k[i - 1][1]);
      }
    }
    return k[k.length - 1][1];
  };
  for (const s of series) {
    const pts = [];
    for (let n = 0; n <= 48; n++) {
      const mm = n * 0.12599;
      const x = px(mm), y = interp(s.knots, mm);
      pts.push(x + ',' + y);
      const dot = document.createElementNS(NS, 'rect');
      dot.setAttribute('x', x - 2.5); dot.setAttribute('y', y - 2.5);
      dot.setAttribute('width', 5); dot.setAttribute('height', 5);
      dot.setAttribute('fill', s.color);
      plot.appendChild(dot);
    }
    const line = document.createElementNS(NS, 'polyline');
    line.setAttribute('points', pts.join(' '));
    line.setAttribute('fill', 'none');
    line.setAttribute('stroke', s.color);
    line.setAttribute('stroke-width', 2);
    plot.appendChild(line);
  }
</script>
</body>
</html>
